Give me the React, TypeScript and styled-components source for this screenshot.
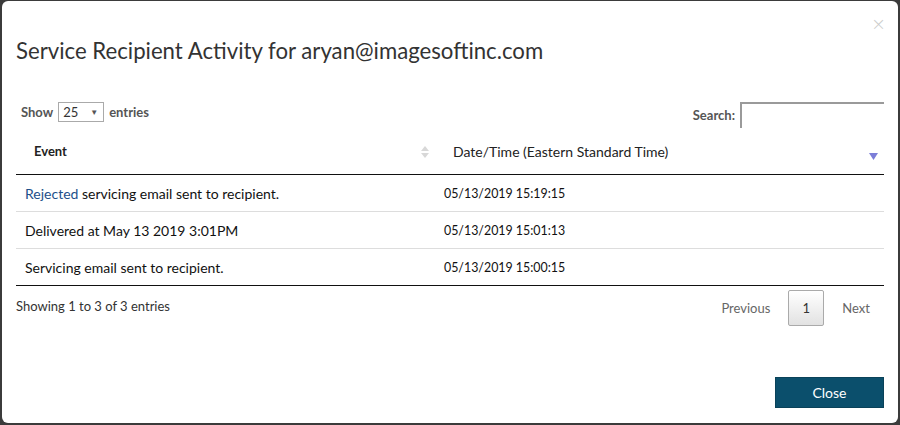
import React from "react";
import styled, { createGlobalStyle } from "styled-components";

const GlobalStyle = createGlobalStyle`
  html, body {
    margin: 0;
    padding: 0;
    background: #3b3b3b;
  }
  body {
    font-family: Lato, "Open Sans", sans-serif;
    color: #222;
  }
  #root {
    padding: 1px 2px 2px 2px;
  }
`;

const Modal = styled.div`
  box-sizing: border-box;
  height: 422px;
  background: #fff;
  border-radius: 6px;
  padding: 0 14px 0 14px;
  display: flex;
  flex-direction: column;
`;

const Header = styled.div`
  position: relative;
  padding: 34px 0 0 0;
  height: 68px;
  box-sizing: border-box;
`;

const Title = styled.h4`
  margin: 0;
  font-size: 22.2px;
  font-weight: 400;
  color: #333;
  line-height: 32px;
`;

const CloseX = styled.span`
  position: absolute;
  top: 14px;
  right: -2px;
  font-size: 18px;
  line-height: 18px;
  color: #ccc;
  font-family: "DejaVu Sans", sans-serif;
  font-weight: 300;
`;

const Controls = styled.div`
  display: flex;
  justify-content: space-between;
  align-items: flex-start;
  margin-top: 33px;
  height: 26px;
  padding-left: 5px;
`;

const Label = styled.label`
  display: flex;
  align-items: center;
  gap: 5px;
  font-size: 13px;
  font-weight: 700;
  color: #555;
`;

const SelectBox = styled.span`
  box-sizing: border-box;
  width: 46px;
  height: 20px;
  border: 1px solid #aaa;
  display: flex;
  align-items: center;
  justify-content: space-between;
  padding: 0 5px 0 4px;
  font-weight: 400;
  color: #333;
  font-size: 13px;
`;

const Caret = styled.span`
  font-size: 8px;
  color: #555;
`;

const SearchInput = styled.span`
  box-sizing: border-box;
  width: 144px;
  height: 26px;
  border-top: 2px solid #9a9a9a;
  border-left: 2px solid #9a9a9a;
`;

const Table = styled.table`
  width: 100%;
  border-collapse: collapse;
  font-size: 14px;
`;

const Th = styled.th<{ $bold?: boolean; $w?: string }>`
  position: relative;
  text-align: left;
  padding: 0 18px;
  height: 46px;
  font-size: ${(p) => (p.$bold ? "13px" : "14px")};
  font-weight: ${(p) => (p.$bold ? 700 : 400)};
  color: #222;
  border-bottom: 1px solid #111;
  width: ${(p) => p.$w || "auto"};
  vertical-align: middle;
`;

const SortIcon = styled.span<{ $top: number }>`
  position: absolute;
  right: 6px;
  top: ${(p) => p.$top}px;
  display: flex;
`;

const Td = styled.td<{ $small?: boolean }>`
  padding: 0 9px;
  height: 36px;
  border-bottom: 1px solid #ddd;
  color: #111;
  font-size: ${(p) => (p.$small ? "12.4px" : "14px")};
  vertical-align: middle;
`;

const Row = styled.tr`
  &:last-child td {
    border-bottom: 1px solid #111;
  }
`;

const LinkText = styled.span`
  color: #1d4f8a;
`;

const Footer = styled.div`
  display: flex;
  justify-content: space-between;
  align-items: flex-start;
  margin-top: 4px;
  height: 36px;
`;

const Info = styled.div`
  font-size: 13px;
  color: #333;
  padding-top: 8px;
`;

const Pager = styled.div`
  display: flex;
  align-items: center;
  font-size: 13px;
`;

const PageLink = styled.span`
  color: #666;
  padding: 0 14px;
`;

const PageBtn = styled.span`
  box-sizing: border-box;
  width: 36px;
  height: 36px;
  display: flex;
  align-items: center;
  justify-content: center;
  border: 1px solid #aaa;
  border-radius: 2px;
  background: linear-gradient(#fff, #e2e2e2);
  color: #333;
  margin: 0 4px;
`;

const Actions = styled.div`
  margin-top: auto;
  display: flex;
  justify-content: flex-end;
  padding-bottom: 15px;
`;

const CloseButton = styled.button`
  width: 109px;
  height: 31px;
  border: 1px solid #0a4259;
  background: #0b4f6c;
  color: #fff;
  font-family: Lato, sans-serif;
  font-size: 14px;
  cursor: pointer;
`;

const rows = [
  { pre: "Rejected", text: " servicing email sent to recipient.", date: "05/13/2019 15:19:15" },
  { pre: "", text: "Delivered at May 13 2019 3:01PM", date: "05/13/2019 15:01:13" },
  { pre: "", text: "Servicing email sent to recipient.", date: "05/13/2019 15:00:15" },
];

export default function App() {
  return (
    <>
      <GlobalStyle />
      <Modal>
        <Header>
          <Title>Service Recipient Activity for aryan@imagesoftinc.com</Title>
          <CloseX>×</CloseX>
        </Header>
        <Controls>
          <Label>
            Show
            <SelectBox>
              25 <Caret>▼</Caret>
            </SelectBox>
            entries
          </Label>
          <Label>
            Search:
            <SearchInput />
          </Label>
        </Controls>
        <Table>
          <thead>
            <tr>
              <Th $bold $w="383px">
                Event
                <SortIcon $top={18}>
                  <svg width="8" height="12" viewBox="0 0 8 12">
                    <path d="M4 0 L8 5 L0 5 Z" fill="#d8d8d8" />
                    <path d="M4 12 L8 7 L0 7 Z" fill="#d8d8d8" />
                  </svg>
                </SortIcon>
              </Th>
              <Th>
                Date/Time (Eastern Standard Time)
                <SortIcon $top={25}>
                  <svg width="9" height="7" viewBox="0 0 9 7">
                    <path d="M0 0 L9 0 L4.5 7 Z" fill="#7c7ed8" />
                  </svg>
                </SortIcon>
              </Th>
            </tr>
          </thead>
          <tbody>
            {rows.map((r) => (
              <Row key={r.date}>
                <Td>
                  {r.pre && <LinkText>{r.pre}</LinkText>}
                  {r.text}
                </Td>
                <Td $small>{r.date}</Td>
              </Row>
            ))}
          </tbody>
        </Table>
        <Footer>
          <Info>Showing 1 to 3 of 3 entries</Info>
          <Pager>
            <PageLink>Previous</PageLink>
            <PageBtn>1</PageBtn>
            <PageLink>Next</PageLink>
          </Pager>
        </Footer>
        <Actions>
          <CloseButton>Close</CloseButton>
        </Actions>
      </Modal>
    </>
  );
}
